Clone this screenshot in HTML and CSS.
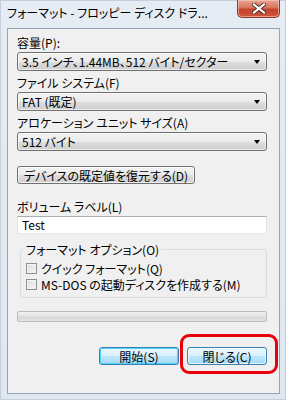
FILE: index.html
```html
<!DOCTYPE html>
<html lang="ja">
<head>
<meta charset="utf-8">
<title>フォーマット - フロッピー ディスク ドライブ</title>
<link rel="stylesheet" href="styles.css">
</head>
<body>
<div class="window">
  <div class="titlebar">
    <span class="title">フォーマット - フロッピー ディスク ドラ...</span>
    <span class="close-btn">
      <svg width="14" height="11" viewBox="0 0 14 11"><path d="M2 1.5 L12 9.5 M12 1.5 L2 9.5" stroke="#4a2a24" stroke-width="4" stroke-linecap="square"/><path d="M2 1.5 L12 9.5 M12 1.5 L2 9.5" stroke="#fff" stroke-width="2.2" stroke-linecap="square"/></svg>
    </span>
  </div>

  <div class="client">
    <div class="field">
      <div class="label">容量(P):</div>
      <div class="combo"><span>3.5 インチ、1.44MB、512 バイト/セクター</span><i class="arrow"></i></div>
    </div>
    <div class="field">
      <div class="label">ファイル システム(F)</div>
      <div class="combo"><span>FAT (既定)</span><i class="arrow"></i></div>
    </div>
    <div class="field">
      <div class="label">アロケーション ユニット サイズ(A)</div>
      <div class="combo"><span>512 バイト</span><i class="arrow"></i></div>
    </div>

    <button class="btn restore">デバイスの既定値を復元する(D)</button>

    <div class="field volume">
      <div class="label">ボリューム ラベル(L)</div>
      <div class="textbox">Test</div>
    </div>

    <fieldset class="group">
      <legend>フォーマット オプション(O)</legend>
      <div class="check"><span class="box"></span>クイック フォーマット(Q)</div>
      <div class="check"><span class="box"></span>MS-DOS の起動ディスクを作成する(M)</div>
    </fieldset>

    <div class="progress"></div>

    <div class="actions">
      <button class="btn default">開始(S)</button>
      <div class="marked">
        <button class="btn hot">閉じる(C)</button>
        <span class="highlight"></span>
      </div>
    </div>
  </div>
</div>
</body>
</html>
```

FILE: styles.css
```css
body {
	margin: 0;
	background: #fff;
	font-family: "Noto Sans CJK JP", "Liberation Sans", sans-serif;
	font-size: 12px;
	font-feature-settings: "palt";
	color: #000;
}

.window {
	width: 286px;
	height: 400px;
	box-sizing: border-box;
	padding: 0 6px 6px 7px;
	display: flex;
	flex-direction: column;
	background: linear-gradient(#e6ecf3, #dfe7f0);
	box-shadow: inset 0 0 0 1px #c5d0dc;
}

.titlebar {
	height: 28px;
	display: flex;
	align-items: flex-start;
}

.title {
	margin-top: 5px;
	line-height: 16px;
	font-size: 12px;
	white-space: nowrap;
}

.close-btn {
	margin-left: auto;
	width: 43px;
	height: 18px;
	box-sizing: border-box;
	display: flex;
	align-items: center;
	justify-content: center;
	border: 1px solid #8a3b2f;
	border-top: none;
	border-radius: 0 0 5px 5px;
	background: linear-gradient(#e8a493 0%, #d8755f 45%, #c4432c 55%, #d0563f 100%);
	box-shadow: inset 0 0 0 1px rgba(255, 220, 210, 0.5);
}

.client {
	flex: 1;
	border: 1px solid #95a3b3;
	background: #f0f0f0;
	padding: 6px 12px 0 9px;
}

.field {
	margin-bottom: 4px;
}

.label {
	height: 15px;
	line-height: 15px;
	margin-bottom: 2px;
	white-space: nowrap;
}

.combo {
	height: 19px;
	box-sizing: border-box;
	border: 1px solid #707070;
	border-radius: 3px;
	background: linear-gradient(#f2f2f2 0%, #ebebeb 50%, #dddddd 51%, #cfcfcf 100%);
	box-shadow: inset 0 0 0 1px rgba(255, 255, 255, 0.6);
	display: flex;
	align-items: center;
	padding: 0 6px 0 4px;
	white-space: nowrap;
}

.combo span {
	flex: 1;
	line-height: 15px;
}

.arrow {
	width: 0;
	height: 0;
	border-left: 3.5px solid transparent;
	border-right: 3.5px solid transparent;
	border-top: 4px solid #000;
}

.btn {
	height: 18px;
	box-sizing: border-box;
	padding: 0;
	border: 1px solid #707070;
	border-radius: 3px;
	background: linear-gradient(#f2f2f2 0%, #ebebeb 50%, #dddddd 51%, #cfcfcf 100%);
	box-shadow: inset 0 0 0 1px rgba(255, 255, 255, 0.7);
	font: inherit;
	line-height: 15px;
	color: #000;
	white-space: nowrap;
}

.restore {
	display: block;
	width: 178px;
	margin-top: 15px;
}

.volume {
	margin-top: 15px;
	margin-bottom: 0;
}

.textbox {
	height: 18px;
	box-sizing: border-box;
	background: #fff;
	border: 1px solid #e2e3ea;
	border-top-color: #abadb3;
	border-bottom-color: #e3e9ef;
	padding-left: 4px;
	line-height: 16px;
}

.group {
	margin: 8px 0 0 3px;
	padding: 3px 4px 5px 5px;
	border: 1px solid #d5dfe5;
	border-radius: 3px;
	min-width: 0;
}

.group legend {
	padding: 0 2px;
	margin-left: -2px;
	line-height: 15px;
}

.check {
	height: 16px;
	display: flex;
	align-items: center;
	white-space: nowrap;
}

.box {
	width: 11px;
	height: 11px;
	box-sizing: border-box;
	margin-right: 4px;
	border: 1px solid #8e8f8f;
	background: linear-gradient(135deg, #dcdcdc, #f8f8f8);
	box-shadow: inset 0 0 0 1px #f4f4f4;
}

.progress {
	margin-top: 13px;
	height: 9px;
	border: 1px solid #bcbcbc;
	border-radius: 2px;
	background: linear-gradient(#f3f3f3, #e0e0e0 50%, #d6d6d6 51%, #e4e4e4);
}

.actions {
	margin-top: 25px;
	display: flex;
	justify-content: flex-end;
	gap: 8px;
}

.actions .btn {
	width: 80px;
	display: block;
}

.btn.default {
	border-color: #3c7fb1;
	background: linear-gradient(#eaf6fd 0%, #d9f0fc 50%, #bee6fd 51%, #a7d9f5 100%);
	box-shadow: inset 0 0 0 1px #48d4fd;
}

.btn.hot {
	border-color: #3c7fb1;
	background: linear-gradient(#eaf6fd 0%, #d9f0fc 50%, #bee6fd 51%, #a7d9f5 100%);
}

.marked {
	position: relative;
}

/* red annotation frame drawn around the close button */
.highlight {
	position: absolute;
	left: -7px;
	right: -11px;
	top: -13px;
	bottom: -9px;
	border: 3px solid #e8000b;
	border-radius: 9px;
}
```
